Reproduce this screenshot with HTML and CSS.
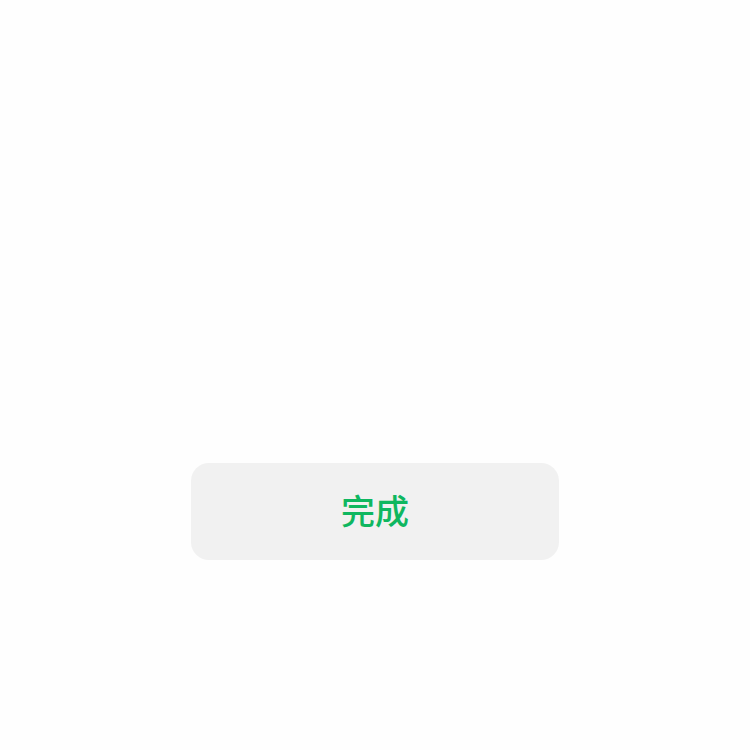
FILE: index.html
```html
<!DOCTYPE html>
<html lang="zh">
<head>
<meta charset="utf-8">
<link rel="stylesheet" href="styles.css">
</head>
<body>
<div class="page">
  <button class="done-btn">完成</button>
</div>
</body>
</html>
```

FILE: styles.css
```css
html, body {
  margin: 0;
  padding: 0;
  background: #fefefe;
}
.page {
  width: 750px;
  height: 750px;
  display: flex;
  flex-direction: column;
  align-items: center;
  padding-top: 463px;
  box-sizing: border-box;
}
.done-btn {
  width: 368px;
  height: 97px;
  border: none;
  border-radius: 18px;
  background: #f1f1f1;
  color: #0fb760;
  font-family: "Noto Sans CJK SC", "Noto Sans", sans-serif;
  font-size: 34px;
  font-weight: 500;
  padding: 0 0 5px 0;
  display: flex;
  align-items: center;
  justify-content: center;
}
```
